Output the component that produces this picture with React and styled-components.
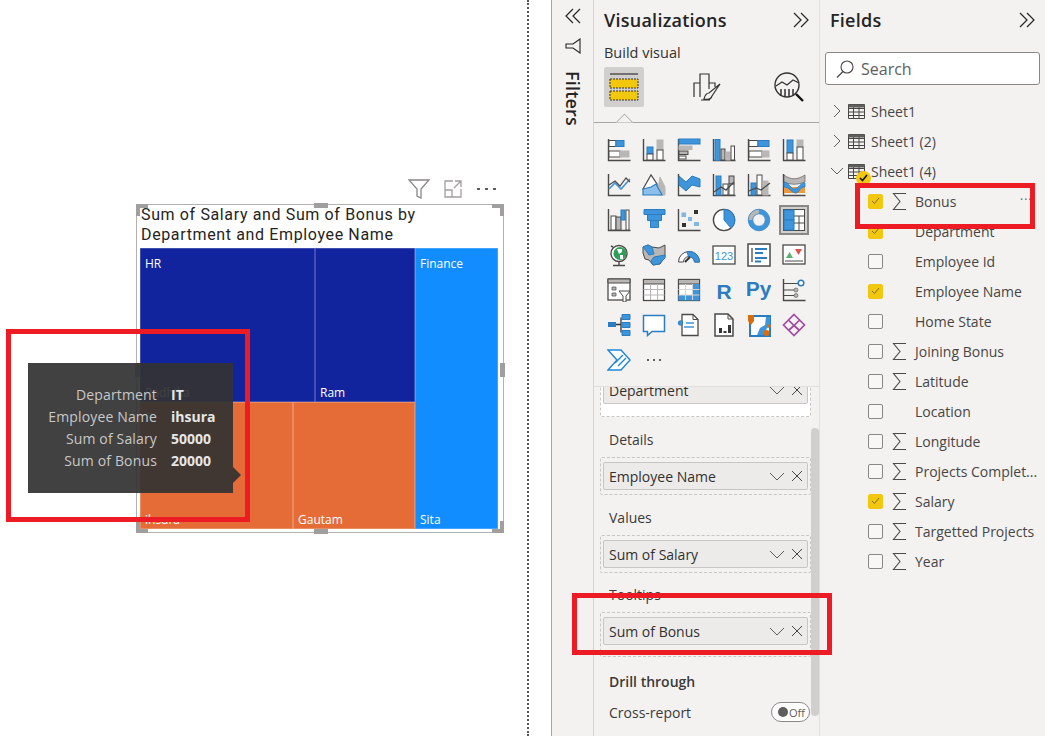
import React from "react";
import styled, { createGlobalStyle } from "styled-components";

const GlobalStyle = createGlobalStyle`
  html, body { margin: 0; padding: 0; background: #fff; }
  body { font-family: "Open Sans", "Noto Sans", sans-serif; color: #323130; }
`;

const DARK = "#4b4a49";
const BLUE = "#3f95dc";
const DEEP = "#2b7cc0";
const GREY = "#b9b7b5";

const Page = styled.div`
  display: flex;
  width: 1045px;
  height: 736px;
  overflow: hidden;
  background: #fff;
`;
const Canvas = styled.div`
  position: relative;
  width: 527px;
  height: 100%;
  border-right: 2px dotted #555;
  flex: none;
`;
const Gutter = styled.div`
  width: 22px;
  flex: none;
  border-right: 1px solid #a8a6a4;
`;
const FilterStrip = styled.div`
  width: 41px;
  flex: none;
  background: #f3f2f1;
  display: flex;
  flex-direction: column;
  align-items: center;
  padding: 7px 0 0 0;
  box-sizing: border-box;
`;
const FilterFunnel = styled.div`
  margin-top: 13px;
  height: 22px;
`;
const FilterText = styled.div`
  writing-mode: vertical-rl;
  font-size: 18px;
  font-weight: 600;
  letter-spacing: 0.2px;
  margin-top: 11px;
  line-height: 20px;
  color: #252423;
`;
const VizPane = styled.div`
  width: 227px;
  flex: none;
  box-sizing: border-box;
  background: #f3f2f1;
  border-left: 1px solid #d6d4d2;
  border-right: 1px solid #e1dfdd;
  display: flex;
  flex-direction: column;
`;
const FieldsPane = styled.div`
  flex: 1;
  background: #f3f2f1;
  display: flex;
  flex-direction: column;
`;
const PaneHeader = styled.div`
  height: 40px;
  flex: none;
  display: flex;
  align-items: center;
  justify-content: space-between;
  padding: 0 9px 0 10px;
`;
const PaneTitle = styled.div`
  font-size: 18px;
  font-weight: 600;
  letter-spacing: 0.25px;
  color: #252423;
`;
const BuildLabel = styled.div`
  height: 26px;
  line-height: 26px;
  padding-left: 10px;
  font-size: 14.5px;
  font-weight: 500;
  color: #323130;
`;
const TabRow = styled.div`
  display: grid;
  grid-template-columns: 40px 1fr 40px;
  margin: 1px 10px 0;
  height: 40px;
  justify-items: center;
  align-items: center;
`;
const TabButton = styled.div`
  width: 40px;
  height: 40px;
  border-radius: 2px;
  display: flex;
  align-items: center;
  justify-content: center;
  background: ${(p) => (p.$active ? "#d2d0ce" : "transparent")};
`;
const Divider = styled.div`
  position: relative;
  height: 1px;
  margin-top: 15px;
  background: #a8a6a4;
  flex: none;
  &::after {
    content: "";
    position: absolute;
    left: 24px;
    top: -6px;
    width: 12px;
    height: 12px;
    background: #f3f2f1;
    border-left: 1px solid #a8a6a4;
    border-top: 1px solid #a8a6a4;
    transform: rotate(45deg);
    clip-path: polygon(0 0, 100% 0, 0 100%);
  }
`;
const VizGrid = styled.div`
  display: grid;
  grid-template-columns: repeat(6, 35px);
  grid-auto-rows: 35px;
  margin: 9px 0 0 7px;
  height: 246px;
  flex: none;
`;
const VizTile = styled.div`
  display: flex;
  align-items: center;
  justify-content: center;
  & > div {
    width: 30px;
    height: 30px;
    display: flex;
    align-items: center;
    justify-content: center;
    box-sizing: border-box;
    border: ${(p) => (p.$active ? "2px solid #8a8886" : "none")};
    background: ${(p) => (p.$active ? "#d2d0ce" : "transparent")};
  }
`;
const WellScroll = styled.div`
  position: relative;
  flex: 1;
  overflow: hidden;
  margin-top: 8px;
  border-top: 1px solid #e1dfdd;
`;
const SectionLabel = styled.div`
  height: 20px;
  line-height: 20px;
  font-size: 14px;
  padding-left: 15px;
  margin-top: ${(p) => p.$top}px;
  margin-bottom: ${(p) => p.$bottom}px;
  font-weight: ${(p) => (p.$bold ? 600 : 400)};
  color: #3b3a39;
`;
const Well = styled.div`
  width: 211px;
  box-sizing: border-box;
  margin-left: 6px;
  margin-top: ${(p) => p.$top || 0}px;
  padding: 4px 2px ${(p) => p.$pad || 4}px;
  border: 1px dashed #c8c6c4;
  border-radius: 2px;
  background: ${(p) => (p.$blank ? "#fff" : "transparent")};
`;
const FieldPill = styled.div`
  height: 28px;
  box-sizing: border-box;
  border: 1px solid #c8c6c4;
  border-radius: 2px;
  background: #edebe9;
  display: flex;
  align-items: center;
  gap: 6px;
  padding: 0 4px 0 5px;
  font-size: 14px;
  color: #323130;
  span { flex: 1; white-space: nowrap; }
`;
const CrossRow = styled.div`
  display: flex;
  align-items: center;
  justify-content: space-between;
  height: 22px;
  margin-top: 9px;
  padding: 0 9px 0 15px;
  font-size: 14px;
  color: #3b3a39;
`;
const Toggle = styled.div`
  width: 39px;
  height: 20px;
  box-sizing: border-box;
  border: 1px solid #8a8886;
  border-radius: 10px;
  background: #fff;
  display: flex;
  align-items: center;
  gap: 1px;
  padding-left: 6px;
  font-size: 11px;
  color: #605e5c;
`;
const ToggleDot = styled.div`
  width: 10px;
  height: 10px;
  border-radius: 50%;
  background: #605e5c;
`;
const ScrollThumb = styled.div`
  position: absolute;
  right: 0;
  top: 41px;
  width: 8px;
  height: 288px;
  border-radius: 4px;
  background: #d0cfcd;
`;
const SearchBox = styled.div`
  margin: 12px 5px 0;
  height: 33px;
  box-sizing: border-box;
  border: 1px solid #8a8886;
  border-radius: 3px;
  background: #fff;
  display: flex;
  align-items: center;
  gap: 6px;
  padding-left: 9px;
  font-size: 16px;
  color: #605e5c;
  flex: none;
`;
const Tree = styled.div`
  margin-top: 11px;
  display: flex;
  flex-direction: column;
`;
const TreeRow = styled.div`
  position: relative;
  height: 30px;
  display: flex;
  align-items: center;
  font-size: 14px;
  color: #484644;
  white-space: nowrap;
  padding-left: ${(p) => (p.$leaf ? 48 : 10)}px;
`;
const TableSlot = styled.div`
  position: relative;
  display: flex;
  margin: 0 6px 0 4px;
`;
const Badge = styled.div`
  position: absolute;
  left: 8px;
  top: 8px;
  width: 15px;
  height: 15px;
  border-radius: 50%;
  background: #f2c80f;
  display: flex;
  align-items: center;
  justify-content: center;
`;
const Check = styled.div`
  width: 15px;
  height: 15px;
  box-sizing: border-box;
  border-radius: 2px;
  flex: none;
  display: flex;
  align-items: center;
  justify-content: center;
  background: ${(p) => (p.$on ? "#f2c80f" : "#f8f7f6")};
  border: 1px solid ${(p) => (p.$on ? "#f2c80f" : "#8a8886")};
`;
const SigmaSlot = styled.div`
  width: 32px;
  flex: none;
  display: flex;
  justify-content: center;
`;
const RowDots = styled.div`
  position: absolute;
  left: 200px;
  top: 5px;
  font-size: 12px;
  letter-spacing: 1px;
  color: #605e5c;
`;
const Visual = styled.div`
  position: absolute;
  left: 136px;
  top: 204px;
  width: 368px;
  height: 329px;
  box-sizing: border-box;
  border: 1px solid #b3b1af;
  padding: 0 5px 3px 3px;
  display: flex;
  flex-direction: column;
`;
const VisualTools = styled.div`
  position: absolute;
  right: 7px;
  top: -27px;
  display: flex;
  align-items: center;
  gap: 13px;
`;
const Handle = styled.div`
  position: absolute;
  background: #a19f9d;
  ${(p) => p.$css}
`;
const Corner = styled.div`
  position: absolute;
  width: 12px;
  height: 12px;
  box-sizing: border-box;
  border: 0 solid #a19f9d;
  ${(p) => p.$css}
`;
const VisualTitle = styled.div`
  font-family: Roboto, "Noto Sans", sans-serif;
  font-size: 16px;
  line-height: 20px;
  letter-spacing: 0.63px;
  color: #252423;
  padding: 0 0 0 1px;
  height: 43px;
  flex: none;
`;
const Treemap = styled.div`
  flex: 1;
  display: flex;
  min-height: 0;
`;
const GroupColumn = styled.div`
  flex: 275;
  display: flex;
  flex-direction: column;
`;
const GroupRow = styled.div`
  flex: ${(p) => p.$size};
  display: flex;
`;
const Cell = styled.div`
  flex: ${(p) => p.$size};
  position: relative;
  background: ${(p) => p.$color};
  box-shadow: inset 0 0 0 0.5px rgba(255, 255, 255, 0.4);
`;
const CellLabel = styled.div`
  position: absolute;
  left: 5px;
  font-size: 12px;
  line-height: 16px;
  color: #fff;
  ${(p) => (p.$bottom ? "bottom: 1px;" : "top: 8px;")}
`;
const Tooltip = styled.div`
  position: absolute;
  left: 28px;
  top: 363px;
  width: 205px;
  height: 130px;
  box-sizing: border-box;
  padding-top: 21px;
  background: rgba(51, 51, 51, 0.93);
  display: grid;
  grid-template-columns: 129px auto;
  grid-auto-rows: 22px;
  column-gap: 14px;
  align-content: start;
  font-size: 14px;
  line-height: 22px;
  &::after {
    content: "";
    position: absolute;
    right: -8px;
    top: 104px;
    border-left: 8px solid rgba(51, 51, 51, 0.93);
    border-top: 8px solid transparent;
    border-bottom: 8px solid transparent;
  }
`;
const TipKey = styled.div`
  text-align: right;
  color: #c8c8c8;
  white-space: nowrap;
  letter-spacing: 0.15px;
`;
const TipValue = styled.div`
  font-weight: 700;
  color: #e6e6e6;
`;
const RedBox = styled.div`
  position: absolute;
  box-sizing: border-box;
  border: 5px solid #ed1c24;
  pointer-events: none;
  left: ${(p) => p.$x}px;
  top: ${(p) => p.$y}px;
  width: ${(p) => p.$w}px;
  height: ${(p) => p.$h}px;
`;

const Svg = ({ size = 24, box = 24, children }) => (
  <svg width={size} height={size} viewBox={`0 0 ${box} ${box}`} fill="none" style={{ display: "block", flex: "none" }}>
    {children}
  </svg>
);

const Axes = () => <path d="M1.5 1v21.5H23.5" stroke={DARK} strokeWidth="1.4" />;
const R = ({ x, y, w, h, f = "#fff", s = DARK }) => <rect x={x} y={y} width={w} height={h} fill={f} stroke={s} strokeWidth="1" />;

const vizIcons = [
  <><Axes /><R x={2} y={2.5} w={7} h={6} /><R x={9} y={2.5} w={8} h={6} f={BLUE} s={DEEP} /><R x={2} y={13} w={11} h={6} /><R x={13} y={13} w={9} h={6} f={GREY} s={GREY} /></>,
  <><Axes /><R x={5} y={9} w={6} h={7} f={BLUE} s={DEEP} /><R x={5} y={16} w={6} h={6} /><R x={15} y={2} w={6} h={10} f={GREY} s={GREY} /><R x={15} y={12} w={6} h={10} /></>,
  <><Axes /><R x={2} y={1} w={21} h={5} f={BLUE} s={DEEP} /><R x={2} y={8} w={13} h={3.5} f={GREY} s={GREY} /><R x={2} y={13} w={9} h={3.5} f={GREY} s={DARK} /><R x={2} y={18} w={7} h={3} /></>,
  <><Axes /><R x={3} y={1.5} w={5} h={21} f={BLUE} s={DEEP} /><R x={9} y={11} w={4} h={11} f={GREY} s={DARK} /><R x={14} y={14} w={4} h={8} f={GREY} s={GREY} /><R x={19} y={8} w={3.5} h={14} /></>,
  <><Axes /><R x={2} y={2.5} w={9} h={6} /><R x={11} y={2.5} w={11} h={6} f={BLUE} s={DEEP} /><R x={2} y={13} w={13} h={6} /><R x={15} y={13} w={7} h={6} f={GREY} s={GREY} /></>,
  <><Axes /><R x={5} y={2} w={6} h={13} f={BLUE} s={DEEP} /><R x={5} y={15} w={6} h={7} /><R x={15} y={2} w={6} h={7} f={GREY} s={GREY} /><R x={15} y={9} w={6} h={13} /></>,
  <><Axes /><path d="M2 16l6-6 6 6 9-10" stroke={BLUE} strokeWidth="1.6" /><path d="M2 12l6-4 5 5 6-8 4 4" stroke={DARK} strokeWidth="1.2" /></>,
  <><path d="M15 22l3-18 5 10v8z" fill={GREY} stroke={GREY} /><path d="M1 16L9 2l6 9v6z" fill="#fff" stroke={DARK} strokeWidth="1.200" /><path d="M1 16l8-2 5-3 6 11H1z" fill="#8cbfeb" stroke={DEEP} strokeWidth="1.200" /></>,
  <><Axes /><path d="M2 3l7 6 6-6 8 3v8l-8-2-6 6-7-6z" fill={BLUE} stroke={DEEP} /></>,
  <><Axes /><R x={4} y={3} w={5} h={19} f={BLUE} s={DEEP} /><R x={11} y={11} w={5} h={11} /><R x={17} y={3} w={5} h={8} f={GREY} s={DARK} /><R x={17} y={11} w={5} h={11} /><path d="M2 19l7-5 5 3 8-8" stroke={DARK} strokeWidth="1.4" /></>,
  <><Axes /><R x={4} y={10} w={5} h={12} f={BLUE} s={DEEP} /><R x={10} y={2} w={5} h={20} f="#fff" /><R x={16} y={8} w={5} h={14} f={GREY} s={GREY} /><path d="M2 18l7-3 5 2 9-7" stroke={DARK} strokeWidth="1.300" /></>,
  <><path d="M1.500 1v21.500h22" stroke={DARK} strokeWidth="1.400" /><path d="M2 2c7 5 13 5 21 0v7c-8 3-14 3-21 0z" fill={GREY} stroke={DARK} strokeWidth=".6" /><path d="M2 14h21v6H2z" fill="#ef9a3a" /><path d="M2 9c5 0 7 8 11 7s6-7 10-6v4c-5-1-6 7-10 6S7 14 2 14z" fill={BLUE} stroke={DEEP} strokeWidth=".8" /></>,
  <><Axes /><R x={4} y={8} w={5} h={14} /><R x={9} y={9} w={5} h={13} f={GREY} s={DARK} /><R x={14} y={2} w={4} h={10} f={BLUE} s={DEEP} /><R x={19} y={2} w={3} h={20} /></>,
  <><path d="M2 1.5h21v5H2z" fill={BLUE} stroke={DEEP} /><path d="M5.5 6.5h14v6h-14z" fill={BLUE} stroke={DEEP} /><path d="M8.5 12.5h8v7h-8z" fill={BLUE} stroke={DEEP} /></>,
  <><Axes /><R x={5} y={5} w={3.5} h={3.5} f="#7fb6e6" s="#7fb6e6" /><rect x={17} y={2} width={4} height={4} fill="#333" /><rect x={11} y={9} width={4} height={4} fill="#7fb6e6" /><rect x={5} y={15} width={4} height={4} fill="#333" /><rect x={17} y={14} width={5} height={4} fill="#7fb6e6" /></>,
  <><circle cx="12" cy="12" r="10.6" fill="#fff" stroke={DARK} strokeWidth="1.4" /><path d="M12 1.4A10.6 10.6 0 0 1 19 20L12 12z" fill={BLUE} stroke={DEEP} /></>,
  <><circle cx="12" cy="12" r="8.5" stroke={BLUE} strokeWidth="4.4" /><path d="M3.5 12A8.5 8.5 0 0 1 12 3.500" stroke={GREY} strokeWidth="4.4" /><circle cx="12" cy="12" r="10.8" stroke={DEEP} strokeWidth=".7" /><circle cx="12" cy="12" r="6.2" stroke={DEEP} strokeWidth=".7" /></>,
  <><rect x="1.500" y="1.500" width="21" height="21" fill="#fff" stroke={DARK} /><R x={2} y={2} w={10} h={10} f={BLUE} s={DEEP} /><R x={2} y={12} w={10} h={10} f={BLUE} s={DEEP} /><path d="M12 8h10.500M17 8v14M12 15h10.500" stroke={DARK} /></>,
  <><circle cx="12" cy="10.500" r="8" fill="#fff" stroke={DARK} strokeWidth="1.4" /><circle cx="13" cy="10.500" r="6.500" fill="#2f9e58" /><path d="M10 6h5v3l-3 2zM13 12h3v4h-3z" fill="#fff" /><path d="M12 19v3M6 22.500h12M4 3l2 1" stroke={DARK} strokeWidth="1.4" /></>,
  <><path d="M1 4l5-2 4 2 7 1 6-3v12l-5 7-7 1-4-5-4-1-2-6z" fill={GREY} stroke={DARK} /><path d="M1 4l5-2 4 2 2 7-5 1-2-3zM12 14l11-2v3l-6 6-6 1-2-4z" fill={BLUE} stroke={DEEP} /></>,
  <><path d="M1.500 19a10.500 10.500 0 0 1 21 0h-5a5.500 5.500 0 0 0-11 0z" fill="#fff" stroke={DARK} /><path d="M10 8.600A10.500 10.500 0 0 1 22.500 19h-5a5.500 5.500 0 0 0-6-5.300z" fill={BLUE} stroke={DEEP} /><path d="M8 19l5-5" stroke="#333" strokeWidth="2" /></>,
  <><rect x="1" y="3" width="22" height="18" fill="#fff" stroke={DARK} strokeWidth="1.300" /><text x="12" y="16.500" textAnchor="middle" fontFamily="Liberation Sans" fontSize="11" fill={BLUE}>123</text></>,
  <><rect x="1" y="1" width="22" height="22" fill="#fff" stroke={DARK} strokeWidth="1.500" /><path d="M5 5v14" stroke={DARK} strokeWidth="1.300" /><path d="M8 6h12M8 10h8M8 15h12M8 18.500h6" stroke={DEEP} strokeWidth="1.800" /></>,
  <><rect x="1" y="2" width="22" height="19" fill="#fff" stroke={DARK} strokeWidth="1.300" /><path d="M4 15l3.500-6 3.500 6z" fill="#5bb174" /><path d="M13 6h7l-3.500 6z" fill="#e0524d" /><path d="M3 18h18" stroke={DARK} /></>,
  <><rect x="1" y="1" width="22" height="21" fill="#fff" stroke={DARK} strokeWidth="1.300" /><path d="M1 1h22v4H1z" fill={GREY} stroke={DARK} /><path d="M5 9h4v3H5zM5 15h4v3H5z" fill={GREY} stroke={DARK} strokeWidth=".7" /><path d="M12 13h11l-4 5v6h-3v-6z" fill="#fff" stroke={DARK} /></>,
  <><rect x="1.500" y="1.500" width="21" height="21" fill="#fff" stroke={DARK} strokeWidth="1.300" /><path d="M1.500 1.500h21V6h-21z" fill={GREY} stroke={DARK} /><path d="M8.500 6v16M15.500 6v16M1.500 11.500h21M1.500 17h21" stroke={GREY} /></>,
  <><rect x="1.500" y="1.500" width="21" height="21" fill="#fff" stroke={DARK} strokeWidth="1.300" /><path d="M1.500 1.500h21V6h-21z" fill={GREY} stroke={DARK} /><path d="M1.500 17h21v5.500h-21zM15.500 6h7v16h-7z" fill={BLUE} /><path d="M8.500 6v16M15.500 6v16M1.500 11.500h21M1.500 17h21" stroke="#d9d7d5" /></>,
  <text x="12" y="21" textAnchor="middle" fontFamily="Liberation Sans" fontWeight="700" fontSize="21" fill={DEEP}>R</text>,
  <text x="11.500" y="18" textAnchor="middle" fontFamily="Liberation Sans" fontWeight="700" fontSize="21" fill={DEEP}>Py</text>,
  <><Axes /><path d="M2 5.500h15M2 12h11M2 17.500h11" stroke={DARK} /><circle cx="19" cy="5" r="2.800" fill="#fff" stroke={DEEP} strokeWidth="1.500" /><circle cx="14" cy="12" r="2" fill={GREY} stroke={DARK} strokeWidth=".6" /><circle cx="14" cy="17.500" r="2" fill={GREY} stroke={DARK} strokeWidth=".6" /></>,
  <><rect x="1" y="9" width="8" height="5" fill={DEEP} /><path d="M9 11.500h5M14 4.500v15" stroke="#333" strokeWidth="1.300" /><path d="M15 1.500h8v5h-8zM15 9.500h8v5h-8zM15 17.500h8v5h-8z" fill={BLUE} stroke={DEEP} /></>,
  <path d="M1.500 2.500h21v16H10l-4.500 4v-4h-4z" fill="#fff" stroke={DEEP} strokeWidth="1.500" />,
  <><path d="M5 1.500h11l5 5v16H5z" fill="#fff" stroke={DARK} strokeWidth="1.300" /><path d="M16 1.500v5h5" stroke={DARK} /><circle cx="3.500" cy="10" r="2.200" fill={BLUE} stroke={DEEP} /><path d="M9 10h8M7 14h10" stroke={BLUE} strokeWidth="1.300" /></>,
  <><path d="M3 1h13l5 5v17H3z" fill="#fff" stroke={DARK} strokeWidth="1.500" /><path d="M16 1v5h5" stroke={DARK} /><path d="M7 15h3v5H7zM11.500 18h3v2h-3zM16 12h3v8h-3z" fill="#333" /></>,
  <><path d="M3 3h20v20H3z" fill="#fff" stroke={DEEP} strokeWidth="2" /><path d="M10 22l3-7 5-3 1-8h4v10l-3 1-3 7z" fill={BLUE} /><path d="M1 2h6v6l-3 4-3-4z" fill="#d96c0e" /><circle cx="19.500" cy="20" r="3" fill="#d96c0e" /><circle cx="22" cy="13" r="1.800" fill="#d96c0e" /></>,
  <path d="M12 1.500l5.500 5.500-5.500 5.500L6.500 7zM6.500 7L1.500 12l10.500 10.500 10.500-10.500-5-5M12 12.500l5.500 5M12 12.500l-5.500 5" stroke="#a349a4" strokeWidth="1.700" />,
  <><path d="M1 2h13l9 10-9 10H1l9-10z" fill="#fff" stroke="#1f86dc" strokeWidth="1.400" /><path d="M8 15l8-8M11 18l8-8" stroke="#1f86dc" strokeWidth="1.400" /></>,
  <path d="M5 12h2M11 12h2M17 12h2" stroke="#333" strokeWidth="1.600" />,
];

const DoubleChevron = ({ left }) => (
  <Svg size={18} box={18}>
    <path d={left ? "M9 2L2 9l7 7M16 2L9 9l7 7" : "M2 2l7 7-7 7M9 2l7 7-7 7"} stroke="#252423" strokeWidth="1.200" />
  </Svg>
);
const Chevron = ({ open }) => (
  <Svg size={14} box={14}>
    <path d={open ? "M1 4l6 6 6-6" : "M4 1l6 6-6 6"} stroke="#605e5c" strokeWidth="1" />
  </Svg>
);
const TableIcon = () => (
  <Svg size={17} box={17}>
    <path d="M.5 1.500h16v14H.5zM.5 5.500h16M.5 9h16M.5 12.500h16M5.500 1.500v14M11 1.500v14" stroke="#484644" strokeWidth="1" />
    <path d="M.5 1.500h16v3H.5z" fill="#605e5c" />
  </Svg>
);
const PillIcons = () => (
  <>
    <Svg size={16} box={16}><path d="M1 5l7 7 7-7" stroke="#605e5c" /></Svg>
    <Svg size={12} box={12}><path d="M1 1l10 10M11 1L1 11" stroke="#484644" /></Svg>
  </>
);
const Tick = ({ dark }) => (
  <svg width="9" height="8" viewBox="0 0 9 8" fill="none"><path d="M1 4l2.500 2.500L8 1" stroke={dark ? "#111" : "#7a6a10"} strokeWidth={dark ? 1.600 : 1} /></svg>
);
const Sigma = () => (
  <svg width="15" height="19" viewBox="0 0 15 19" fill="none"><path d="M14 1.500H1.500L8 9.500l-6.500 8H14" stroke="#4b4a49" strokeWidth="1.100" /></svg>
);

const fields = [
  { name: "Bonus", sigma: true, on: true, dots: true },
  { name: "Department", on: true },
  { name: "Employee Id" },
  { name: "Employee Name", on: true },
  { name: "Home State" },
  { name: "Joining Bonus", sigma: true },
  { name: "Latitude", sigma: true },
  { name: "Location" },
  { name: "Longitude", sigma: true },
  { name: "Projects Complet...", sigma: true },
  { name: "Salary", sigma: true, on: true },
  { name: "Targetted Projects", sigma: true },
  { name: "Year", sigma: true },
];

const tipRows = [
  ["Department", "IT"],
  ["Employee Name", "ihsura"],
  ["Sum of Salary", "50000"],
  ["Sum of Bonus", "20000"],
];

const App = () => {
  return (
    <Page>
      <GlobalStyle />
      <Canvas>
        <Visual>
          <VisualTools>
            <Svg size={22} box={22}><path d="M1 2h20l-8 9v9l-4-2v-7z" stroke="#8a8886" strokeWidth="1.300" /></Svg>
            <Svg size={20} box={20}><path d="M10 2H2v16h16v-8M2 11h7v7M12 2h6v6M18 2l-7 7" stroke="#a19f9d" strokeWidth="1.300" /></Svg>
            <Svg size={20} box={20}><path d="M1 10h3M9 10h3M17 10h3" stroke="#605e5c" strokeWidth="2" /></Svg>
          </VisualTools>
          <Corner $css="left:-1px;top:-1px;border-left-width:4px;border-top-width:4px;" />
          <Corner $css="right:-1px;top:-1px;border-right-width:4px;border-top-width:4px;" />
          <Corner $css="left:-1px;bottom:-1px;border-left-width:4px;border-bottom-width:4px;" />
          <Corner $css="right:-1px;bottom:-1px;border-right-width:4px;border-bottom-width:4px;" />
          <Handle $css="left:177px;top:-2px;width:14px;height:5px;" />
          <Handle $css="left:177px;bottom:-2px;width:14px;height:5px;" />
          <Handle $css="left:-2px;top:158px;width:5px;height:14px;" />
          <Handle $css="right:-2px;top:158px;width:5px;height:14px;" />
          <VisualTitle>Sum of Salary and Sum of Bonus by Department and Employee Name</VisualTitle>
          <Treemap>
            <GroupColumn>
              <GroupRow $size={154}>
                <Cell $size={175} $color="#12239e"><CellLabel>HR</CellLabel><CellLabel $bottom>Radhika</CellLabel></Cell>
                <Cell $size={100} $color="#12239e"><CellLabel $bottom>Ram</CellLabel></Cell>
              </GroupRow>
              <GroupRow $size={127}>
                <Cell $size={153} $color="#e66c37"><CellLabel>IT</CellLabel><CellLabel $bottom>ihsura</CellLabel></Cell>
                <Cell $size={122} $color="#e66c37"><CellLabel $bottom>Gautam</CellLabel></Cell>
              </GroupRow>
            </GroupColumn>
            <Cell $size={83} $color="#118dff"><CellLabel>Finance</CellLabel><CellLabel $bottom>Sita</CellLabel></Cell>
          </Treemap>
        </Visual>
        <Tooltip>
          {tipRows.map(([k, v]) => (
            <React.Fragment key={k}>
              <TipKey>{k}</TipKey>
              <TipValue>{v}</TipValue>
            </React.Fragment>
          ))}
        </Tooltip>
        <RedBox $x={6} $y={329} $w={244} $h={193} />
      </Canvas>
      <Gutter />
      <FilterStrip>
        <DoubleChevron left />
        <FilterFunnel>
          <Svg size={16} box={16}><path d="M15 1v14l-7-5H1V6h7z" stroke="#252423" strokeWidth="1.100" /></Svg>
        </FilterFunnel>
        <FilterText>Filters</FilterText>
      </FilterStrip>
      <VizPane>
        <PaneHeader>
          <PaneTitle>Visualizations</PaneTitle>
          <DoubleChevron />
        </PaneHeader>
        <BuildLabel>Build visual</BuildLabel>
        <TabRow>
          <TabButton $active>
            <Svg size={32} box={32}>
              <path d="M2 3h28" stroke="#333" strokeWidth="1.200" />
              <rect x="2" y="8" width="28" height="9" fill="#f2c80f" stroke="#333" strokeDasharray="2 1" />
              <rect x="2" y="20" width="28" height="9" fill="#f2c80f" stroke="#333" strokeDasharray="2 1" />
            </Svg>
          </TabButton>
          <TabButton>
            <Svg size={32} box={32}>
              <path d="M3 26V12h6v14M9 12V3h9v9h6v4M18 12v6" stroke="#333" strokeWidth="1.200" />
              <path d="M29 13L18 22c-3 0-4 2-5 6 4 1 7 0 8-3zM10 29h9" stroke="#333" strokeWidth="1.200" />
            </Svg>
          </TabButton>
          <TabButton>
            <Svg size={32} box={32}>
              <circle cx="14" cy="14" r="12" stroke="#333" strokeWidth="1.400" />
              <path d="M3 15l6-4 5 3 6-5 6 3" stroke="#333" strokeWidth="1.200" />
              <path d="M8 18v7M12 18v8M16 18v8M20 18v6" stroke="#333" strokeWidth="1.500" />
              <path d="M23 23l7 7" stroke="#111" strokeWidth="2.400" />
            </Svg>
          </TabButton>
        </TabRow>
        <Divider />
        <VizGrid>
          {vizIcons.map((icon, i) => (
            <VizTile key={i} $active={i === 17}>
              <div><Svg>{icon}</Svg></div>
            </VizTile>
          ))}
        </VizGrid>
        <WellScroll>
          <Well $top={-16} $pad={12} $blank>
            <FieldPill><span>Department</span><PillIcons /></FieldPill>
          </Well>
          <SectionLabel $top={13} $bottom={7}>Details</SectionLabel>
          <Well><FieldPill><span>Employee Name</span><PillIcons /></FieldPill></Well>
          <SectionLabel $top={13} $bottom={7}>Values</SectionLabel>
          <Well><FieldPill><span>Sum of Salary</span><PillIcons /></FieldPill></Well>
          <SectionLabel $top={12} $bottom={7}>Tooltips</SectionLabel>
          <Well $pad={11}><FieldPill><span>Sum of Bonus</span><PillIcons /></FieldPill></Well>
          <SectionLabel $top={15} $bold>Drill through</SectionLabel>
          <CrossRow>
            <span>Cross-report</span>
            <Toggle><ToggleDot />Off</Toggle>
          </CrossRow>
          <ScrollThumb />
        </WellScroll>
      </VizPane>
      <FieldsPane>
        <PaneHeader>
          <PaneTitle>Fields</PaneTitle>
          <DoubleChevron />
        </PaneHeader>
        <SearchBox>
          <Svg size={20} box={20}><circle cx="12" cy="8" r="6" stroke="#484644" strokeWidth="1.100" /><path d="M8 12.500L2 18.500" stroke="#484644" strokeWidth="1.300" /></Svg>
          Search
        </SearchBox>
        <Tree>
          {["Sheet1", "Sheet1 (2)", "Sheet1 (4)"].map((t, i) => (
            <TreeRow key={t}>
              <Chevron open={i === 2} />
              <TableSlot>
                <TableIcon />
                {i === 2 && <Badge><Tick dark /></Badge>}
              </TableSlot>
              {t}
            </TreeRow>
          ))}
          {fields.map((f) => (
            <TreeRow $leaf key={f.name}>
              <Check $on={f.on}>{f.on && <Tick />}</Check>
              <SigmaSlot>{f.sigma && <Sigma />}</SigmaSlot>
              {f.name}
              {f.dots && <RowDots>···</RowDots>}
            </TreeRow>
          ))}
        </Tree>
        <RedBox $x={855} $y={183} $w={180} $h={46} />
      </FieldsPane>
      <RedBox $x={572} $y={593} $w={260} $h={62} />
    </Page>
  );
};

export default App;
